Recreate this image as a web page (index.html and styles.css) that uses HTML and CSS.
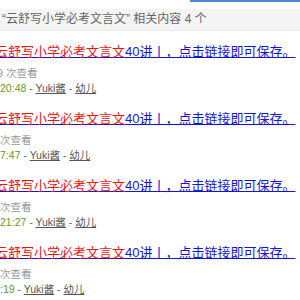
FILE: index.html
```html
<!DOCTYPE html>
<html lang="zh-CN">
<head>
<meta charset="utf-8">
<title>相关内容</title>
<link rel="stylesheet" href="styles.css">
</head>
<body>
<div class="topbar"><div class="searchline"></div></div>
<div class="head">“云舒写小学必考文言文” 相关内容 4 个</div>
<ul class="list">
  <li class="item">
    <a class="title" href="#"><span class="hl">云舒写小学必考文言文</span>40讲丨，点击链接即可保存。</a>
    <div class="views">169 次查看</div>
    <div class="meta"><span class="time">2021-10-28 20:48</span> - <a class="u" href="#">Yuki酱</a> - <a class="u" href="#">幼儿</a></div>
  </li>
  <li class="item">
    <a class="title" href="#"><span class="hl">云舒写小学必考文言文</span>40讲丨，点击链接即可保存。</a>
    <div class="views">85 次查看</div>
    <div class="meta"><span class="time">2021-10-2 17:47</span> - <a class="u" href="#">Yuki酱</a> - <a class="u" href="#">幼儿</a></div>
  </li>
  <li class="item">
    <a class="title" href="#"><span class="hl">云舒写小学必考文言文</span>40讲丨，点击链接即可保存。</a>
    <div class="views">76 次查看</div>
    <div class="meta"><span class="time">2021-10-21 21:27</span> - <a class="u" href="#">Yuki酱</a> - <a class="u" href="#">幼儿</a></div>
  </li>
  <li class="item">
    <a class="title" href="#"><span class="hl">云舒写小学必考文言文</span>40讲丨，点击链接即可保存。</a>
    <div class="views">64 次查看</div>
    <div class="meta"><span class="time">2021-9-5 15:19</span> - <a class="u" href="#">Yuki酱</a> - <a class="u" href="#">幼儿</a></div>
  </li>
</ul>
</body>
</html>
```
FILE: styles.css
```css
html, body {
  margin: 0;
  padding: 0;
  background: #fff;
  overflow: hidden;
  font-family: "Liberation Sans", Arial, "Noto Sans CJK SC", sans-serif;
}
.topbar {
  display: flex;
  justify-content: flex-end;
  height: 2px;
}
.searchline {
  width: 110px;
  height: 2px;
  background: #4f84d2;
}
.head {
  margin-top: 7px;
  height: 21px;
  line-height: 21px;
  background: #f4f4f4;
  border-bottom: 1px solid #e8e8e8;
  padding-left: 2px;
  font-size: 12px;
  color: #666;
  white-space: nowrap;
}
.list {
  list-style: none;
  margin: 0;
  padding: 0;
}
.item {
  padding-top: 13px;
  padding-bottom: 2px;
  margin-left: -5px;
  white-space: nowrap;
}
.title {
  display: block;
  font-size: 13px;
  line-height: 16px;
  color: #1414d6;
  text-decoration: underline;
  text-decoration-color: #1414d6;
}
.hl {
  color: #f01414;
}
.views {
  margin-top: 5px;
  font-size: 10.5px;
  line-height: 16px;
  color: #999;
  text-indent: -9.5px;
}
.meta {
  font-size: 10.5px;
  line-height: 15px;
  color: #666;
  text-indent: -51.6px;
}
.time {
  color: #5d9a2c;
}
.u {
  color: #555;
  text-decoration: underline;
}
```
